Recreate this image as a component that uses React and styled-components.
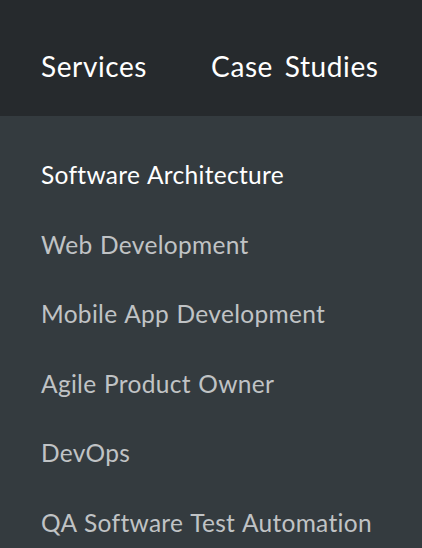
import React from "react";
import styled, { createGlobalStyle } from "styled-components";

const Global = createGlobalStyle`
  html, body { margin: 0; padding: 0; background: #343b3f; }
  body { font-family: Lato, "Open Sans", sans-serif; }
`;

const Page = styled.div`
  width: 422px;
  height: 548px;
  overflow: hidden;
  background: #343b3f;
`;

const TopBar = styled.nav`
  height: 116px;
  background: #262a2d;
  display: flex;
  align-items: center;
  gap: 64px;
  padding: 16px 0 0 41px;
  box-sizing: border-box;
`;

const TopLink = styled.a`
  color: #ffffff;
  font-size: 28px;
  font-weight: 400;
  letter-spacing: 0.6px;
  word-spacing: 4px;
  line-height: 1;
  text-decoration: none;
  white-space: nowrap;
`;

const Menu = styled.ul`
  list-style: none;
  margin: 0;
  padding: 24px 0 0 41px;
  display: flex;
  flex-direction: column;
`;

const Item = styled.li`
  height: 69.5px;
  display: flex;
  align-items: center;
  font-size: 24.5px;
  font-weight: 400;
  letter-spacing: 0.3px;
  word-spacing: 1px;
  color: ${(p) => (p.$active ? "#ffffff" : "#c0c3c5")};
  white-space: nowrap;
`;

const items = [
  "Software Architecture",
  "Web Development",
  "Mobile App Development",
  "Agile Product Owner",
  "DevOps",
  "QA Software Test Automation",
];

export default function App() {
  return (
    <Page>
      <Global />
      <TopBar>
        <TopLink>Services</TopLink>
        <TopLink>Case Studies</TopLink>
      </TopBar>
      <Menu>
        {items.map((t, i) => (
          <Item key={t} $active={i === 0}>{t}</Item>
        ))}
      </Menu>
    </Page>
  );
}
